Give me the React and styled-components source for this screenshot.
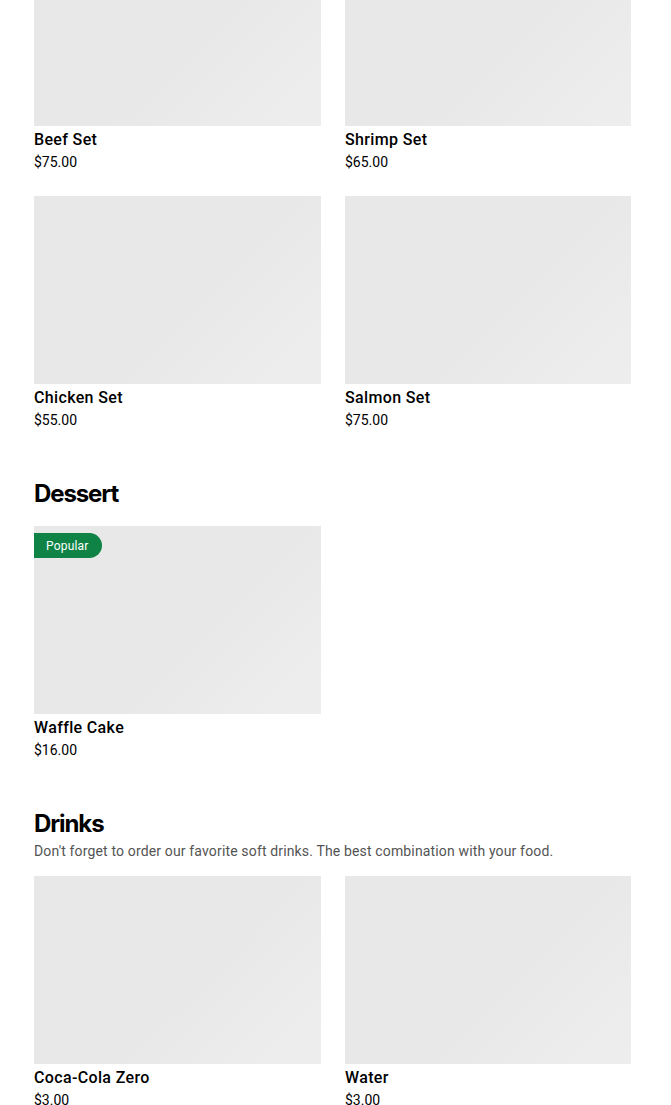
import React from "react";
import styled, { createGlobalStyle } from "styled-components";

const GlobalStyle = createGlobalStyle`
  html, body {
    margin: 0;
    padding: 0;
    background: #ffffff;
  }
  body {
    font-family: Roboto, "Liberation Sans", Arial, sans-serif;
    color: #000000;
    overflow: hidden;
  }
`;

const Page = styled.main`
  padding: 0 40px 40px 34px;
  margin-top: -62px;
`;

const Section = styled.section`
  & + & {
    padding-top: 48px;
  }
`;

const Heading = styled.h2`
  margin: 0 0 ${(p) => (p.$withText ? "1px" : "16px")};
  font-family: Inter, "Liberation Sans", sans-serif;
  font-size: 24px;
  line-height: 32px;
  font-weight: 700;
  letter-spacing: -1.1px;
  color: #000000;
`;

const Description = styled.p`
  margin: 0 0 15px;
  font-size: 14px;
  line-height: 20px;
  letter-spacing: 0.15px;
  color: #545454;
`;

const Grid = styled.div`
  display: grid;
  grid-template-columns: 287px 286px;
  column-gap: 24px;
  row-gap: 24px;
`;

const Card = styled.article`
  display: flex;
  flex-direction: column;
`;

const Thumb = styled.div`
  position: relative;
  height: 188px;
  background: linear-gradient(135deg, #e8e8e8 0%, #e8e8e8 55%, #eeeeee 100%);
`;

const Badge = styled.span`
  position: absolute;
  top: 7px;
  left: 0;
  height: 25px;
  padding: 0 13px 0 12px;
  display: flex;
  align-items: center;
  background: #0e8345;
  color: #ffffff;
  font-size: 12px;
  letter-spacing: 0.2px;
  border-radius: 0 13px 13px 0;
`;

const Title = styled.h3`
  margin: 4px 0 0;
  font-size: 16px;
  line-height: 20px;
  font-weight: 500;
  letter-spacing: 0.35px;
  color: #000000;
`;

const Price = styled.div`
  margin-top: 2px;
  font-size: 14px;
  line-height: 20px;
  color: #000000;
`;

const sections = [
  {
    items: [
      { name: "Beef Set", price: "$75.00" },
      { name: "Shrimp Set", price: "$65.00" },
      { name: "Chicken Set", price: "$55.00" },
      { name: "Salmon Set", price: "$75.00" },
    ],
  },
  {
    title: "Dessert",
    items: [{ name: "Waffle Cake", price: "$16.00", badge: "Popular" }],
  },
  {
    title: "Drinks",
    text: "Don't forget to order our favorite soft drinks. The best combination with your food.",
    items: [
      { name: "Coca-Cola Zero", price: "$3.00" },
      { name: "Water", price: "$3.00" },
    ],
  },
];

const MenuItem = ({ item }) => (
  <Card>
    <Thumb>{item.badge && <Badge>{item.badge}</Badge>}</Thumb>
    <Title>{item.name}</Title>
    <Price>{item.price}</Price>
  </Card>
);

export default function App() {
  return (
    <>
      <GlobalStyle />
      <Page>
        {sections.map((section, i) => (
          <Section key={i}>
            {section.title && <Heading $withText={!!section.text}>{section.title}</Heading>}
            {section.text && <Description>{section.text}</Description>}
            <Grid>
              {section.items.map((item) => (
                <MenuItem key={item.name} item={item} />
              ))}
            </Grid>
          </Section>
        ))}
      </Page>
    </>
  );
}
